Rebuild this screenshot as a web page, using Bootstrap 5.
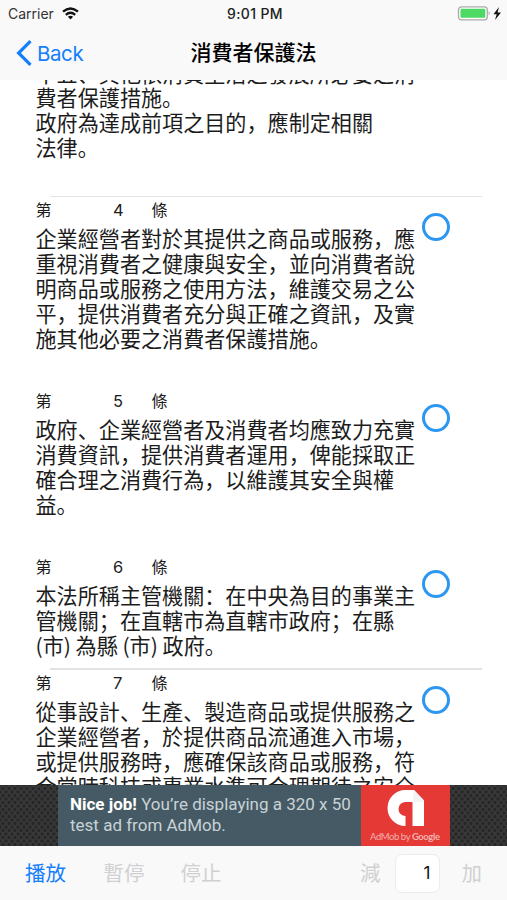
<!DOCTYPE html>
<html lang="zh-Hans">
<head>
<meta charset="utf-8">
<meta name="viewport" content="width=device-width, initial-scale=1">
<title>消費者保護法</title>
<link href="https://cdn.jsdelivr.net/npm/bootstrap@5.3.0/dist/css/bootstrap.min.css" rel="stylesheet">
<style>
body{font-family:Inter,"Noto Sans CJK SC",sans-serif;color:#1c1c1c;background:#fff}
.screen{width:507px;height:900px}
.top{height:80px;background:#f9f9f9;z-index:2}
.status{height:27px;font-size:14px;color:#333;padding:0 5px 0 8px}
.status .clock{font-weight:500;letter-spacing:.35px;color:#222}
.titlebar{height:51px;padding:0 16px;color:#000}
.back{color:#147efb;font-size:20.5px;letter-spacing:-.4px}
.law-title{font-size:21px;font-weight:500;line-height:30px}
.laws{height:705px}
.law{padding-left:35.5px}
.law-head{height:29px;font-size:16px;line-height:25px;grid-template-columns:77px 39px 20px}
.law-head .num{font-family:Inter,sans-serif;font-size:16.5px;line-height:26px;padding-left:.5px}
.law-text{width:387px;font-family:"Noto Sans CJK SC",sans-serif;font-size:21.1px;line-height:24.9px;white-space:nowrap}
.ring{width:28px;height:28px;border:3px solid #2b97f1;margin-top:16px;margin-left:-1px}
.rule{height:2px;background:#e3e3e5;margin:0 25px 0 50px}
.rule-thin{height:1px}
.first{margin-top:-19.5px;height:135.5px}
.art4{height:191px}.art5{height:166px}.art6{height:114px}
.ad{height:61px;background-color:#383838;background-image:radial-gradient(circle,#262626 1.3px,transparent 1.9px),radial-gradient(circle,#262626 1.3px,transparent 1.9px);background-size:6px 7px;background-position:0 0,3px 3.5px;padding-left:58px}
.ad-copy{width:303px;background:#455a64;color:#c9d2d6;font-family:Roboto,sans-serif;font-size:17px;line-height:20.5px;padding:9px 0 0 12px;white-space:nowrap}
.ad-copy b{color:#fff}
.ad-logo{width:89px;background:#e53935}
.tools{height:54px;background:#f9f9f9;font-size:20.5px;line-height:30px;color:#d0d0d2;padding:0 25px}
.tools>span:not(.count){padding-top:2px}
.tools .play{color:#147efb;margin-right:37.5px}
.tools .halt{gap:36px}
.count{width:45px;height:39px;background:#fff;border:1px solid #ececec;border-radius:7px;color:#111;font-size:17px;padding-right:8px;margin:0 22px 0 14px}
</style>
<script src="https://cdn.jsdelivr.net/npm/bootstrap@5.3.0/dist/js/bootstrap.bundle.min.js"></script>
</head>
<body class="overflow-hidden">
<div class="screen d-flex flex-column overflow-hidden">
<header class="top position-relative flex-shrink-0">
  <div class="status row g-0 align-items-center">
    <div class="col d-flex align-items-center"><span>Carrier</span>
      <svg class="ms-2" width="17" height="13" viewBox="0 0 17 13" fill="none" stroke="#111" stroke-width="2.3"><path d="M1 4.700Q8.500-1.800 16 4.700M3.800 7.800Q8.500 3.800 13.200 7.800"/><path d="M5.900 9.700Q8.500 7.800 11.100 9.700L8.500 12.400Z" fill="#111" stroke="none"/></svg>
    </div>
    <div class="col-auto clock">9:01 PM</div>
    <div class="col d-flex align-items-center justify-content-end">
      <svg width="45" height="16" viewBox="0 0 45 16"><rect x="1.500" y=".8" width="28.800" height="13" rx="3" fill="#fff" stroke="#aaa" stroke-width="1.300"/><rect x="3.500" y="2.800" width="24.800" height="9" rx="1" fill="#4cd964"/><path d="M31.600 5q2.200 2.200 0 4.400z" fill="#aaa"/><path d="M42 1L36.500 8.300h3.200L38 14l6-7.500h-3.400z" fill="#111"/></svg>
    </div>
  </div>
  <div class="titlebar row g-0 align-items-center">
    <div class="col d-flex align-items-center back">
      <svg width="17" height="26" viewBox="0 0 17 26" fill="none" stroke="#147efb" stroke-width="3.200"><path d="M14.500 1.200L2.600 13l11.900 11.800"/></svg><span class="ms-1 pt-1">Back</span>
    </div>
    <div class="col-auto law-title">消費者保護法</div>
    <div class="col"></div>
  </div>
</header>
<main class="laws overflow-hidden flex-shrink-0">
  <section class="law first"><div class="law-text">十五、其他依消費生活之發展所必要之消<br>費者保護措施。<br>政府為達成前項之目的，應制定相關<br>法律。</div></section>
  <div class="rule rule-thin"></div>
  <section class="law art4 d-flex">
    <div class="law-text"><div class="law-head d-grid"><span>第</span><span class="num">4</span><span>條</span></div>企業經營者對於其提供之商品或服務，應<br>重視消費者之健康與安全，並向消費者說<br>明商品或服務之使用方法，維護交易之公<br>平，提供消費者充分與正確之資訊，及實<br>施其他必要之消費者保護措施。</div>
    <div class="ring rounded-circle"></div>
  </section>
  <section class="law art5 d-flex">
    <div class="law-text"><div class="law-head d-grid"><span>第</span><span class="num">5</span><span>條</span></div>政府、企業經營者及消費者均應致力充實<br>消費資訊，提供消費者運用，俾能採取正<br>確合理之消費行為，以維護其安全與權<br>益。</div>
    <div class="ring rounded-circle"></div>
  </section>
  <section class="law art6 d-flex">
    <div class="law-text"><div class="law-head d-grid"><span>第</span><span class="num">6</span><span>條</span></div>本法所稱主管機關：在中央為目的事業主<br>管機關；在直轄市為直轄市政府；在縣<br>(市) 為縣 (市) 政府。</div>
    <div class="ring rounded-circle"></div>
  </section>
  <div class="rule"></div>
  <section class="law d-flex">
    <div class="law-text"><div class="law-head d-grid"><span>第</span><span class="num">7</span><span>條</span></div>從事設計、生產、製造商品或提供服務之<br>企業經營者，於提供商品流通進入市場，<br>或提供服務時，應確保該商品或服務，符<br>合當時科技或專業水準可合理期待之安全</div>
    <div class="ring rounded-circle"></div>
  </section>
</main>
<aside class="ad d-flex flex-shrink-0">
  <div class="ad-copy"><b>Nice job!</b> You’re displaying a 320 x 50<br>test ad from AdMob.</div>
  <div class="ad-logo">
    <svg width="89" height="61" viewBox="0 0 89 61"><path d="M44.500 5H53l10 10.500V41H51.500V17h-7a7 7 0 0 0 0 14V41A18 18 0 0 1 44.500 5z" fill="#fff"/><path d="M51.500 17H63v-1.500L53 5z" fill="#f3f3f3"/><text x="44" y="54.500" text-anchor="middle" textLength="70" font-family="Lato,sans-serif" font-size="9.500" fill="#f4b1ae">AdMob by <tspan font-weight="700">Google</tspan></text></svg>
  </div>
</aside>
<footer class="tools d-flex align-items-center flex-shrink-0">
  <span class="play">播放</span><span class="halt me-auto d-flex"><span>暫停</span><span>停止</span></span>
  <span>減</span><span class="count d-flex align-items-center justify-content-end">1</span><span>加</span>
</footer>
</div>
</body>
</html>
